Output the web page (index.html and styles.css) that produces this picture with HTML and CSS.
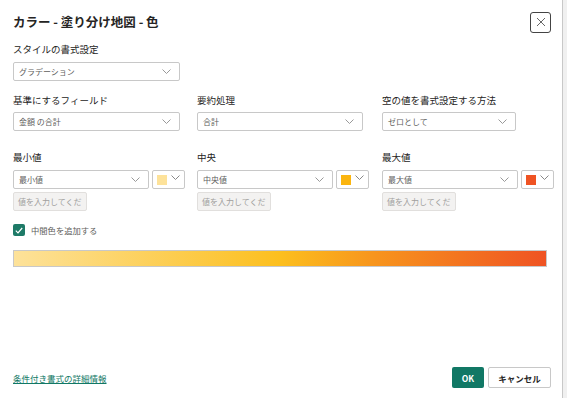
FILE: index.html
```html
<!DOCTYPE html>
<html lang="ja">
<head>
	<meta charset="UTF-8">
	<title>カラー - 塗り分け地図 - 色</title>
	<link rel="stylesheet" href="styles.css">
</head>
<body>
	<div class="dialog">
		<div class="head">
			<h1>カラー - 塗り分け地図 - 色</h1>
			<a href="javascript:;" class="close">
				<svg width="10" height="10" viewBox="0 0 10 10"><path d="M1 1L9 9M9 1L1 9" stroke="#666" stroke-width="1" fill="none"/></svg>
			</a>
		</div>

		<p class="label first">スタイルの書式設定</p>
		<div class="select w-style">グラデーション<svg class="chev" width="9" height="5" viewBox="0 0 9 5"><path d="M0.5 0.5L4.5 4.5L8.5 0.5" stroke="#999" fill="none"/></svg></div>

		<div class="row row-top">
			<div class="col">
				<p class="label">基準にするフィールド</p>
				<div class="select w-field">金額 の合計<svg class="chev" width="9" height="5" viewBox="0 0 9 5"><path d="M0.5 0.5L4.5 4.5L8.5 0.5" stroke="#999" fill="none"/></svg></div>
			</div>
			<div class="col">
				<p class="label">要約処理</p>
				<div class="select w-sum">合計<svg class="chev" width="9" height="5" viewBox="0 0 9 5"><path d="M0.5 0.5L4.5 4.5L8.5 0.5" stroke="#999" fill="none"/></svg></div>
			</div>
			<div class="col">
				<p class="label">空の値を書式設定する方法</p>
				<div class="select w-empty">ゼロとして<svg class="chev" width="9" height="5" viewBox="0 0 9 5"><path d="M0.5 0.5L4.5 4.5L8.5 0.5" stroke="#999" fill="none"/></svg></div>
			</div>
		</div>

		<div class="row row-mid">
			<div class="col">
				<p class="label">最小値</p>
				<div class="pair">
					<div class="select w-val">最小値<svg class="chev" width="9" height="5" viewBox="0 0 9 5"><path d="M0.5 0.5L4.5 4.5L8.5 0.5" stroke="#999" fill="none"/></svg></div>
					<div class="swatch"><span class="chip min"></span><svg class="chev" width="9" height="5" viewBox="0 0 9 5"><path d="M0.5 0.5L4.5 4.5L8.5 0.5" stroke="#888" fill="none"/></svg></div>
				</div>
				<div class="input">値を入力してくだ</div>
			</div>
			<div class="col">
				<p class="label">中央</p>
				<div class="pair">
					<div class="select w-val">中央値<svg class="chev" width="9" height="5" viewBox="0 0 9 5"><path d="M0.5 0.5L4.5 4.5L8.5 0.5" stroke="#999" fill="none"/></svg></div>
					<div class="swatch"><span class="chip mid"></span><svg class="chev" width="9" height="5" viewBox="0 0 9 5"><path d="M0.5 0.5L4.5 4.5L8.5 0.5" stroke="#888" fill="none"/></svg></div>
				</div>
				<div class="input">値を入力してくだ</div>
			</div>
			<div class="col">
				<p class="label">最大値</p>
				<div class="pair">
					<div class="select w-val">最大値<svg class="chev" width="9" height="5" viewBox="0 0 9 5"><path d="M0.5 0.5L4.5 4.5L8.5 0.5" stroke="#999" fill="none"/></svg></div>
					<div class="swatch"><span class="chip max"></span><svg class="chev" width="9" height="5" viewBox="0 0 9 5"><path d="M0.5 0.5L4.5 4.5L8.5 0.5" stroke="#888" fill="none"/></svg></div>
				</div>
				<div class="input">値を入力してくだ</div>
			</div>
		</div>

		<div class="check">
			<span class="box"><svg width="8" height="7" viewBox="0 0 8 7"><path d="M0.8 3.6L3 5.8L7.2 1" stroke="#fff" stroke-width="1.2" fill="none"/></svg></span>
			中間色を追加する
		</div>

		<div class="bar"></div>

		<div class="foot">
			<a href="javascript:;" class="link">条件付き書式の詳細情報</a>
			<div class="btns">
				<a href="javascript:;" class="btn ok">OK</a>
				<a href="javascript:;" class="btn cancel">キャンセル</a>
			</div>
		</div>
	</div>
</body>
</html>
```

FILE: styles.css
```css
html, body {
	margin: 0;
	height: 100%;
	background-color: #f0f0f0;
}
body {
	font-family: "Noto Sans CJK JP", "Noto Sans", sans-serif;
	color: #252423;
}
.dialog {
	box-sizing: border-box;
	width: 563px;
	height: 398px;
	padding: 12px 11px 10px 13px;
	background-color: #fff;
	border-right: 1px solid #c8c8c8;
	display: flex;
	flex-direction: column;
}
.head {
	display: flex;
	justify-content: space-between;
	align-items: center;
	height: 20px;
}
h1 {
	margin: 0;
	font-size: 12.5px;
	font-weight: bold;
	line-height: 20px;
}
.close {
	box-sizing: border-box;
	width: 21px;
	height: 21px;
	border: 1px solid #444;
	border-radius: 3px;
	display: flex;
	align-items: center;
	justify-content: center;
}
.label {
	margin: 0;
	font-size: 9.5px;
	line-height: 14px;
	color: #252423;
}
.label.first {
	margin-top: 10px;
}
.select, .swatch, .input {
	box-sizing: border-box;
	height: 19px;
	border: 1px solid #c8c8c8;
	border-radius: 2px;
	display: flex;
	align-items: center;
	font-size: 8px;
	color: #605e5c;
	background-color: #fff;
}
.select {
	justify-content: space-between;
	padding: 0 8px 0 5px;
	margin-top: 6px;
}
.w-style { width: 167px; }
.w-field { width: 167px; }
.w-sum { width: 166px; }
.w-empty { width: 134px; }
.w-val { width: 136px; margin-top: 0; }
.row {
	display: grid;
	grid-template-columns: 184px 185px 185px;
}
.row-top {
	margin-top: 12px;
}
.row-top .select {
	margin-top: 5px;
}
.row-mid {
	margin-top: 19px;
}
.pair {
	display: flex;
	gap: 3px;
	margin-top: 6px;
}
.swatch {
	width: 33px;
	padding: 0 4px 0 4px;
	justify-content: space-between;
}
.swatch .chev {
	margin-top: -5px;
}
.chip {
	width: 10px;
	height: 10px;
}
.chip.min { background-color: #fde29a; }
.chip.mid { background-color: #fbb50f; }
.chip.max { background-color: #ef5323; }
.input {
	width: 74px;
	margin-top: 3px;
	padding-left: 4px;
	background-color: #f3f2f1;
	border-color: #e1dfdd;
	color: #a19f9d;
}
.check {
	display: flex;
	align-items: center;
	gap: 6px;
	margin-top: 12px;
	height: 14px;
	font-size: 8.3px;
	color: #605e5c;
}
.box {
	width: 12px;
	height: 12px;
	border-radius: 2px;
	background-color: #1e7a67;
	display: flex;
	align-items: center;
	justify-content: center;
}
.bar {
	box-sizing: border-box;
	width: 534px;
	height: 17px;
	margin-top: 13px;
	border: 1px solid #c8c8c8;
	background: linear-gradient(to right, #fde29a, #fcbf1e 50%, #f7941d 68%, #ef5323);
}
.foot {
	margin-top: auto;
	display: flex;
	justify-content: space-between;
	align-items: center;
}
.link {
	font-size: 8.5px;
	color: #117865;
	text-decoration: underline;
}
.btns {
	display: flex;
	gap: 4px;
}
.btn {
	box-sizing: border-box;
	height: 21px;
	display: flex;
	align-items: center;
	justify-content: center;
	font-size: 8.5px;
	font-weight: bold;
	text-decoration: none;
	border-radius: 2px;
}
.ok {
	width: 32px;
	background-color: #117865;
	color: #fff;
}
.cancel {
	width: 63px;
	border: 1px solid #c8c8c8;
	background-color: #fff;
	color: #252423;
}
```
